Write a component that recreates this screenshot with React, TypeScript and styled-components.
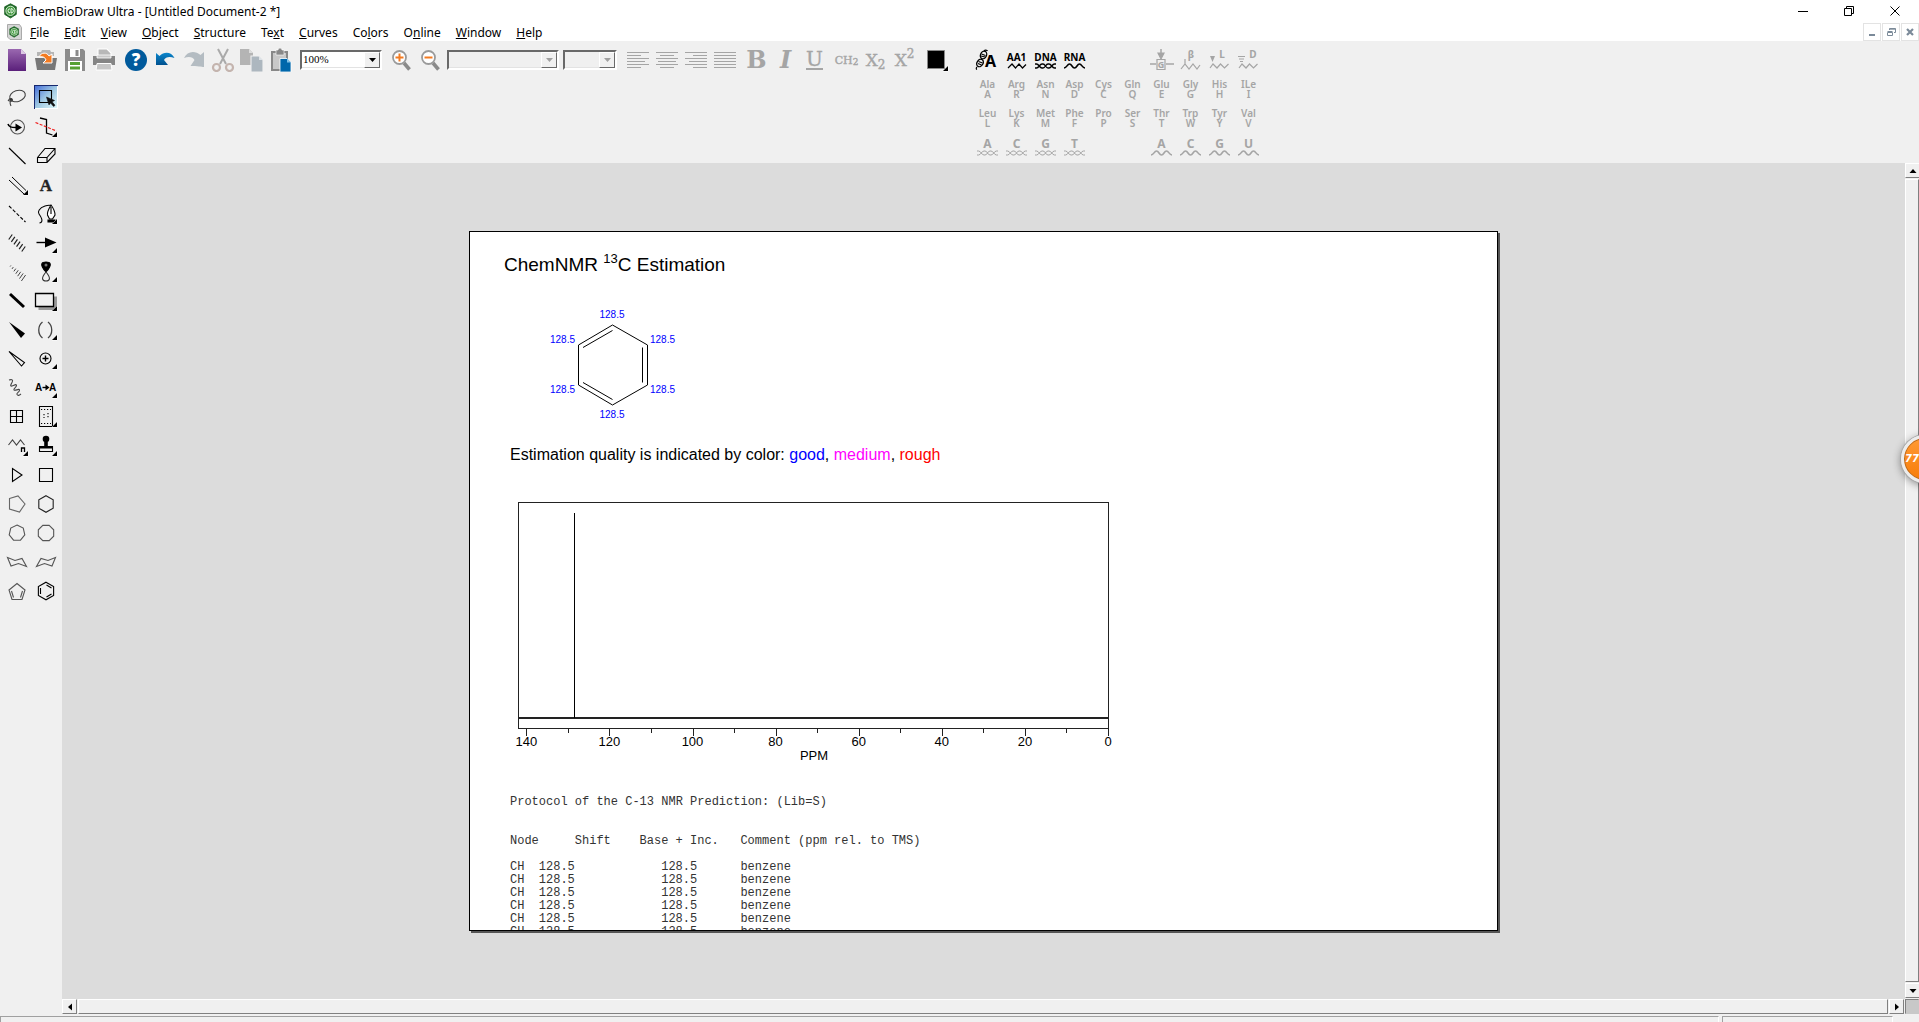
import React from 'react';
import styled, { createGlobalStyle, css } from 'styled-components';

const chrome = '#f0f0f0';
const disabled = '#a5a5a5';
const ui = `'Noto Sans', 'Open Sans', sans-serif`;
const doc = `'Liberation Sans', Arial, sans-serif`;

const GlobalStyle = createGlobalStyle`
  *, *::before, *::after { box-sizing: border-box; }
  body { margin: 0; background: ${chrome}; color: #000; font-family: ${ui}; font-size: 12px; }
  button { font: inherit; color: inherit; background: none; border: 0; padding: 0; margin: 0; }
  svg { display: block; }
`;

/* ---------- window frame ---------- */

const Window = styled.div`
  position: relative;
  display: flex;
  flex-direction: column;
  height: 100vh;
  overflow: hidden;
`;

const TitleBar = styled.header`
  display: flex;
  align-items: center;
  height: 22px;
  flex: none;
  padding: 0 1px 0 3px;
  background: #fff;
`;

const Title = styled.h1`
  flex: 1;
  margin: 0 0 0 5px;
  padding-top: 2px;
  font-size: 12px;
  font-weight: 400;
  line-height: 20px;
`;

const CaptionButton = styled.button`
  width: 46px;
  height: 20px;
  display: grid;
  place-items: center;
`;

const MenuBar = styled.nav`
  display: flex;
  align-items: center;
  height: 19px;
  flex: none;
  padding-left: 7px;
  background: #fff;
`;

const MenuList = styled.ul`
  flex: 1;
  display: flex;
  gap: 15px;
  list-style: none;
  margin: 0;
  padding: 2px 0 0 8px;
`;

const MenuItem = styled.button`
  display: block;
  line-height: 20px;
`;

const ChildButtons = styled.div`
  display: flex;
  gap: 1px;
`;

const ChildButton = styled.button`
  width: 18px;
  height: 18px;
  display: grid;
  place-items: center;
  border: 1px solid #e3e3e3;
  color: #7b8a99;
`;

/* ---------- work area ---------- */

const WorkArea = styled.div`
  flex: 1;
  min-height: 0;
  display: grid;
  grid-template-columns: 62px auto 1fr;
  grid-template-rows: 38px auto minmax(0, 1fr);
`;

const MainToolbar = styled.div`
  grid-column: 1 / 3;
  grid-row: 1;
  display: flex;
  align-items: center;
  gap: 3px;
  padding: 0 22px 0 2px;
`;

const ToolGroup = styled.div`
  display: flex;
`;

const ToolButton = styled.button<{ $dim?: boolean }>`
  width: 29px;
  height: 29px;
  display: grid;
  place-items: center;
  color: ${(p) => (p.$dim ? disabled : '#000')};
`;

const Glyph = styled.span<{ $size: number; $italic?: boolean; $light?: boolean; $under?: boolean }>`
  font-family: 'DejaVu Serif', 'Liberation Serif', serif;
  font-size: ${(p) => p.$size}px;
  line-height: 1;
  font-weight: ${(p) => (p.$light ? 400 : 700)};
  font-style: ${(p) => (p.$italic ? 'italic' : 'normal')};
  ${(p) => p.$light && css`-webkit-text-stroke: 0.4px currentColor;`}
  ${(p) => p.$under && css`border-bottom: 2px solid currentColor; line-height: 18px;`}
  white-space: nowrap;
`;

const Script = styled.span<{ $raise: number; $size: number }>`
  font-size: ${(p) => p.$size}px;
  line-height: 0;
  vertical-align: ${(p) => p.$raise}px;
`;

const ComboGroup = styled.div<{ $lead: number; $trail: number }>`
  display: flex;
  gap: 4px;
  margin: 0 ${(p) => p.$trail}px 0 ${(p) => p.$lead}px;
`;

const ComboBox = styled.span<{ $width: number; $off?: boolean }>`
  position: relative;
  display: block;
  width: ${(p) => p.$width}px;
  height: 20px;
  background: ${(p) => (p.$off ? chrome : '#fff')};
  border: 2px solid;
  border-color: #696969 #fff #fff #696969;
  box-shadow: inset -1px -1px 0 #e3e3e3;
`;

const ComboSelect = styled.select`
  display: block;
  appearance: none;
  width: 100%;
  height: 100%;
  border: 0;
  padding: 0 1px 2px;
  background: transparent;
  color: #000;
  opacity: 1;
  font-family: 'Liberation Serif', serif;
  font-size: 11px;
  line-height: 14px;
`;

const ComboArrow = styled.span<{ $off?: boolean }>`
  position: absolute;
  top: 0;
  right: 0;
  width: 16px;
  height: 16px;
  display: grid;
  place-items: center;
  background: ${chrome};
  border: 1px solid;
  border-color: #fff #696969 #696969 #fff;
  color: ${(p) => (p.$off ? '#a0a0a0' : '#000')};
  pointer-events: none;
`;

const BioPalette = styled.div`
  grid-column: 3;
  grid-row: 1 / 3;
  justify-self: start;
  display: grid;
  grid-template-columns: repeat(10, 29px);
  grid-auto-rows: 29px;
  padding: 4px 0 2px;
`;

const BioButton = styled.button<{ $on?: boolean; $col?: number }>`
  display: flex;
  flex-direction: column;
  align-items: center;
  justify-content: center;
  grid-column: ${(p) => p.$col ?? 'auto'};
  color: ${(p) => (p.$on ? '#000' : disabled)};
`;

const Residue = styled.span`
  font-size: 10px;
  font-weight: 600;
  line-height: 10px;
  text-align: center;
  white-space: pre-line;
`;

const Acid = styled.span<{ $big?: boolean }>`
  font-size: ${(p) => (p.$big ? 12 : 10)}px;
  font-weight: 700;
  line-height: 12px;
`;

const ToolBox = styled.aside`
  grid-column: 1;
  grid-row: 2 / 4;
  display: grid;
  grid-template-columns: repeat(2, 29px);
  grid-auto-rows: 29px;
  align-content: start;
  padding: 3px 0 0 2px;
`;

const PaletteButton = styled.button<{ $selected?: boolean }>`
  width: 24px;
  height: 24px;
  place-self: center;
  color: #000;
  ${(p) =>
    p.$selected &&
    css`
      background: linear-gradient(135deg, #3f68d8 0%, #9fc8e2 50%, #e4fbfb 100%);
      box-shadow: inset 1px 1px 0 #16286e, inset -1px -1px 0 #fff;
    `}
`;

/* ---------- document view ---------- */

const DocumentView = styled.div`
  grid-column: 2 / 4;
  grid-row: 3;
  display: grid;
  grid-template-columns: minmax(0, 1fr) 14px;
  grid-template-rows: minmax(0, 1fr) 15px;
`;

const Desk = styled.main`
  display: flex;
  justify-content: center;
  min-height: 0;
  padding: 68px 24px 68px;
  background: #dcdcdc;
`;

const Sheet = styled.article`
  flex: 1;
  max-width: 1029px;
  overflow: hidden;
  padding: 21px 34px 0;
  background: #fff;
  border: 1px solid #000;
  box-shadow: 2px 2px 0 #555;
  font-family: ${doc};
`;

const SheetTitle = styled.h2`
  margin: 0;
  font-size: 19px;
  font-weight: 400;
  line-height: 24px;
`;

const Mass = styled.sup`
  font-size: 13px;
  line-height: 0;
  vertical-align: 8px;
`;

const Molecule = styled.svg`
  margin: 29px 0 0 44px;
`;

const Quality = styled.p`
  margin: 23px 0 0 6px;
  font-size: 16px;
  line-height: 20px;
`;

const Tint = styled.span<{ $color: string }>`
  color: ${(p) => p.$color};
`;

const Spectrum = styled.svg`
  margin: 35px 0 0 6px;
  overflow: visible;
`;

const Protocol = styled.section`
  margin: 32px 0 0 6px;
  font-family: 'Liberation Mono', 'Courier New', monospace;
  font-size: 12px;
  line-height: 13px;
  color: #333;
`;

const ProtocolTitle = styled.h3`
  margin: 0 0 26px;
  font-size: 12px;
  font-weight: 400;
`;

const ShiftTable = styled.table`
  table-layout: fixed;
  width: 62ch;
  border-collapse: collapse;
  white-space: pre;
  th, td { padding: 0; text-align: left; font-weight: 400; }
  th { padding-bottom: 13px; }
  th:nth-child(2) { padding-left: 5ch; }
  td:nth-child(3) { padding-left: 3ch; }
`;

const Col = styled.col<{ $ch: number }>`
  width: ${(p) => p.$ch}ch;
`;

/* ---------- scroll bars and status bar ---------- */

const ScrollBar = styled.div<{ $vertical?: boolean }>`
  display: flex;
  flex-direction: ${(p) => (p.$vertical ? 'column' : 'row')};
  gap: 1px;
  padding: ${(p) => (p.$vertical ? '0 0 1px' : '0 1px 0 0')};
  background: ${chrome};
`;

const raised = css`
  border: 1px solid;
  border-color: #fff #808080 #808080 #fff;
`;

const ScrollButton = styled.button`
  ${raised}
  width: 15px;
  height: 15px;
  display: grid;
  place-items: center;
`;

const Thumb = styled.div`
  ${raised}
  flex: 1;
`;

const Corner = styled.div`
  background: #c8c8c8;
  border: 1px solid;
  border-color: #808080 transparent transparent #808080;
`;

const StatusBar = styled.footer`
  flex: none;
  display: flex;
  gap: 3px;
  height: 8px;
  padding: 2px 26px 0 0;
`;

const StatusPane = styled.div<{ $width?: number }>`
  flex: ${(p) => (p.$width ? `0 0 ${p.$width}px` : '1')};
  border: 1px solid #a0a0a0;
  border-right-color: #fff;
  border-bottom: 0;
`;

const Bubble = styled.div`
  position: absolute;
  top: 435px;
  right: -30px;
  width: 48px;
  height: 48px;
  padding-left: 1px;
  border-radius: 50%;
  border: 3px solid #ececec;
  background: linear-gradient(#ff9a35, #f77c08);
  box-shadow: 0 0 0 1px #a8a8a8, 0 2px 8px rgba(0, 0, 0, 0.45), inset 0 0 0 1px #b86a20;
  color: #fff;
  font: italic 700 10px/42px 'DejaVu Sans', sans-serif;
`;

/* ---------- icons ---------- */

type IconProps = { children: React.ReactNode; fly?: boolean; color?: string };

const Icon = ({ children, fly, color = 'currentColor' }: IconProps) => (
  <svg width="24" height="24" viewBox="0 0 24 24" fill="none" stroke={color} strokeWidth="1.1" aria-hidden="true">
    {children}
    {fly && <path d="M23 18v5h-5z" fill="#000" stroke="#fff" strokeWidth="1" paintOrder="stroke" />}
  </svg>
);

const Down = () => (
  <svg width="7" height="4" viewBox="0 0 7 4" fill="currentColor" aria-hidden="true"><path d="M0 0h7L3.500 4z" /></svg>
);

const Arrow = ({ d }: { d: string }) => (
  <svg width="8" height="8" viewBox="0 0 8 8" fill="#000" aria-hidden="true"><path d={d} /></svg>
);

const Logo = ({ framed }: { framed?: boolean }) => (
  <svg width="15" height="16" viewBox="0 0 15 16" aria-hidden="true">
    {framed && <path d="M.5 .5h12l2 3v12H3L.5 13z" fill="#d6d6d6" stroke="#999" strokeWidth=".8" />}
    <g transform={framed ? 'translate(1.5 2) scale(.75)' : undefined}>
      <path d="M7.500 .8l5.800 3v7.600l-5.800 3.600-5.800-3.600V3.800z" fill="#1f6b2a" stroke="#1b5e20" strokeWidth=".8" />
      <circle cx="7.500" cy="7.800" r="4.600" fill="#3f9a3c" stroke="#e6f4e0" strokeWidth=".9" />
      <path d="M7 5.800a2 2 0 1 0 0 4M8 5.600v4.400c3 0 3-4.400 0-4.400" fill="none" stroke="#fff" strokeWidth=".9" />
    </g>
  </svg>
);

const polygon = (n: number, cx: number, cy: number, r: number, turn: number) =>
  Array.from({ length: n }, (_, i) => {
    const a = ((turn + (360 / n) * i) * Math.PI) / 180;
    return `${(cx + r * Math.cos(a)).toFixed(2)},${(cy + r * Math.sin(a)).toFixed(2)}`;
  }).join(' ');

/* strokes laid across the diagonal of a bond, growing from one length to another */
const hashes = (count: number, from: number, to: number) =>
  Array.from({ length: count }, (_, i) => {
    const t = i / (count - 1);
    const x = 5.5 + 13 * t;
    const y = 7 + 12 * t;
    const h = (from + (to - from) * t) / 2;
    return `M${x - h * 0.7} ${y + h}L${x + h * 0.7} ${y - h}`;
  }).join('');

const gray = '#666';

const palette: { name: string; icon: React.ReactNode; selected?: boolean }[] = [
  { name: 'Lasso', icon: <Icon color="#444"><ellipse cx="12.500" cy="11" rx="8" ry="5.500" transform="rotate(-18 12.500 11)" /><path d="M3.500 16c0-3 4-3 4-1s-4 1-4.500 0M7 15c-2 1-2.500 3-1 6" /><circle cx="6" cy="14.500" r="1" fill="#000" /></Icon> },
  { name: 'Marquee', selected: true, icon: <Icon><path d="M5.500 5.500h12v12h-12z" /><path d="M12.500 12l8 3.500-2.500 1.200 3 3.600-1.400 1.200-3-3.600-1.600 2z" fill="#111" stroke="#111" strokeWidth=".6" /></Icon> },
  { name: 'Structure Perspective', icon: <Icon color="#555"><circle cx="12.500" cy="13" r="7" /><path d="M3 10c1 3 3 3.500 8 3.500" stroke="#000" strokeWidth="1.600" /><path d="M10.500 9.500l6.500 4-6.500 4z" fill="#000" stroke="none" /></Icon> },
  { name: 'Bond Rotation', icon: <Icon fly><path d="M6 4l6.500 1.500V19l6 2" strokeWidth="1.300" /><path d="M1.500 8.500l21 8.500" stroke="#f02020" strokeDasharray="3 1.500" /></Icon> },
  { name: 'Solid Bond', icon: <Icon><path d="M4 5l16.500 16" /></Icon> },
  { name: 'Eraser', icon: <Icon><path d="M3.500 14.500L11 5.500h10V11l-8 8.500H3.500zM3.500 14.500H13L21 5.500M13 14.500v5" /></Icon> },
  { name: 'Multiple Bonds', icon: <Icon fly><path d="M4 8l15 14M7 5l14 13.500" strokeWidth="1" /></Icon> },
  { name: 'Text', icon: <Icon><text x="12" y="19" textAnchor="middle" fontFamily="'Liberation Serif', serif" fontWeight="700" fontSize="17" fill="#222" stroke="#222" strokeWidth=".4">A</text></Icon> },
  { name: 'Dashed Bond', icon: <Icon><path d="M4 5l16.500 16" strokeDasharray="3.500 1.800" /></Icon> },
  { name: 'Pen', icon: <Icon fly><path d="M5.500 22c5-1 1-7-.5-9s0-6 6-8c3-1 6-1 6 0" /><path d="M17 4c-3 5-4 8-3.500 10l2 4h3l2.500-4c0-3-1-6-4-10zM17 6v7" fill="#fff" /><path d="M14 19h7v2h-7z" fill="#000" /></Icon> },
  { name: 'Hashed Bond', icon: <Icon color="#222"><path d={hashes(6, 5, 5)} strokeWidth="1.200" /></Icon> },
  { name: 'Arrow', icon: <Icon fly><path d="M2.500 12.500H12" strokeWidth="1.400" /><path d="M11 7.500l11.500 5-11.500 5z" fill="#000" stroke="none" /></Icon> },
  { name: 'Hashed Wedged Bond', icon: <Icon color="#333"><path d={hashes(7, 1, 6)} strokeWidth=".9" /></Icon> },
  { name: 'Orbital', icon: <Icon fly><path d="M12 13C4 4 9 3 12 3s8 1 0 10z" fill="#000" /><circle cx="12" cy="6" r="1.500" fill="#777" stroke="none" /><path d="M12 13c-6 7-3 9 0 9s6-2 0-9z" stroke="#333" /></Icon> },
  { name: 'Bold Bond', icon: <Icon><path d="M5 6l14 13" strokeWidth="3" /></Icon> },
  { name: 'Drawing Elements', icon: <Icon fly><path d="M4.500 8.500H23V22H4.500z" fill="#999" stroke="none" /><path d="M1.500 5.500h18v13h-18z" fill={chrome} strokeWidth="1.300" /></Icon> },
  { name: 'Wedged Bond', icon: <Icon><path d="M4 5l16 11.500-4 4.500z" fill="#000" stroke="none" /></Icon> },
  { name: 'Bracket', icon: <Icon fly color="#444"><path d="M8.500 5c-5 4-5 12 0 16M14 5c5 4 5 12 0 16" strokeWidth="1.300" /></Icon> },
  { name: 'Hollow Wedged Bond', icon: <Icon><path d="M4 5.500l15.500 11-3 3.500z" /></Icon> },
  { name: 'Chemical Symbol', icon: <Icon fly><circle cx="11.500" cy="12.500" r="5.500" /><path d="M8.500 12.500h6M11.500 9.500v6" strokeWidth="1.400" /></Icon> },
  { name: 'Wavy Bond', icon: <Icon color="#444"><path d="M4 5c3-1 4.500 0 3 2.500s-2 4 0 3.500 4.500-2.500 4.500-.5-3.500 3-2.500 4.500 5-2 5.500 0-3.500 3-2.500 4.500 2 1 4-.5" /></Icon> },
  { name: 'Reaction Mapping', icon: <Icon fly><text x="1" y="16" fontFamily="'Liberation Sans', sans-serif" fontWeight="700" fontSize="10" fill="#000" stroke="none">A</text><text x="15" y="16" fontFamily="'Liberation Sans', sans-serif" fontWeight="700" fontSize="10" fill="#000" stroke="none">A</text><path d="M8.500 12.500h5" strokeWidth="1.400" /><path d="M11.500 9.500l4 3-4 3z" fill="#000" stroke="none" /></Icon> },
  { name: 'Table', icon: <Icon><path d="M5.500 6.500h12v12h-12zM11.500 6.500v12M5.500 12.500h12" /></Icon> },
  { name: 'TLC Plate', icon: <Icon fly><path d="M5.500 2.500h13v20h-13z" /><path d="M7 5.500h10M7 19.500h10M10 10v4M14 9v6" strokeDasharray="1.200 1.800" /></Icon> },
  { name: 'Acyclic Chain', icon: <Icon fly color="#444"><path d="M3.500 12l4-5 4 5 4-5 4 5" /><path d="M16.500 19v-4h3v4" stroke="#000" strokeWidth="1.300" /></Icon> },
  { name: 'Templates', icon: <Icon fly><circle cx="12" cy="6" r="3.300" fill="#000" stroke="none" /><path d="M10.800 9h2.400v4h-2.400z" fill="#000" /><path d="M5.500 13.500h13v5h-13z" /><path d="M5 15.500h14V13H5z" fill="#000" stroke="none" /></Icon> },
  { name: 'Cyclopropane', icon: <Icon><path d="M7.500 6.500v13l9.500-6.500z" /></Icon> },
  { name: 'Cyclobutane', icon: <Icon><path d="M5.500 6.500h13v13h-13z" /></Icon> },
  { name: 'Cyclopentane', icon: <Icon color={gray}><path d="M4.500 7.500L13 5l7 8-5.500 8-10-3z" /></Icon> },
  { name: 'Cyclohexane', icon: <Icon color="#222"><polygon points={polygon(6, 12, 13, 8.3, -90)} /></Icon> },
  { name: 'Cycloheptane', icon: <Icon color="#555"><polygon points={polygon(7, 12, 13, 8, -90)} /></Icon> },
  { name: 'Cyclooctane', icon: <Icon color="#555"><polygon points={polygon(8, 12, 13, 8.3, -67.5)} /></Icon> },
  { name: 'Cyclohexane Chair', icon: <Icon color="#555"><path d="M2.500 8.500L10 11.500l7-2 4.500 8-8-3-7.500 2.500z" /></Icon> },
  { name: 'Cyclohexane Chair, flipped', icon: <Icon color="#555"><path d="M21.500 8.500L14 11.500 7 9.500l-4.500 8 8-3 7.500 2.500z" /></Icon> },
  { name: 'Cyclopentadiene', icon: <Icon color="#555"><path d="M12 5.500l8 6.500-3 9.500H7L4 12zM6.500 13l2 6.500M17.500 13l-2 6.500" /></Icon> },
  { name: 'Benzene', icon: <Icon><polygon points={polygon(6, 12, 13, 8.8, -90)} /><path d="M12.500 7l5 3M12.500 19l5-3M6.500 10v6" /></Icon> },
];

const fileTools: { name: string; icon: React.ReactNode }[] = [
  { name: 'New', icon: <Icon><defs><linearGradient id="plum" x2="0" y2="1"><stop stopColor="#9a68b0" /><stop offset="1" stopColor="#5a1f7a" /></linearGradient></defs><path d="M3 1h13l5 5v17H3z" fill="url(#plum)" stroke="none" /><path d="M16 1v5h5z" fill="#dcc8e4" stroke="none" /></Icon> },
  { name: 'Open', icon: <Icon><path d="M3 4h4l1-2h8l1 2h3v4H3z" fill="#b5b5b5" stroke="none" /><path d="M1 10h22l-2 12H3z" fill="#777" stroke="none" /><path d="M5 9c2-5 8-5 10-1l3-2v9h-9l3-3c-1-3-4-4-7-3z" fill="#f47b20" stroke="#fff" strokeWidth="1" /></Icon> },
  { name: 'Save', icon: <Icon><path d="M2 1h18l2 2v20H2z" fill="#8b8b8b" stroke="none" /><path d="M7 1h10v8H7z" fill="#fff" stroke="none" /><path d="M12.500 2h3v6h-3z" fill="#8b8b8b" stroke="none" /><path d="M5 13h14v10H5z" fill="#fff" stroke="none" /><path d="M7 14h10v3H7zM7 18.500h10v3H7z" fill="#56a032" stroke="none" /></Icon> },
  { name: 'Print', icon: <Icon><path d="M6 1h9l4 4v6H6z" fill="#b8b8b8" stroke="#fff" /><path d="M1 8h22v9H1z" fill="#858585" stroke="none" /><path d="M5 7h14v3H5z" fill="#c8c8c8" stroke="#fff" strokeWidth=".8" /><path d="M5 15.500h14l1 6.500H4z" fill="#c6c6c6" stroke="#fff" strokeWidth="1" /></Icon> },
];

const blueFade = (
  <linearGradient id="sea" x2="0" y2="1"><stop stopColor="#0a86cc" /><stop offset="1" stopColor="#00518f" /></linearGradient>
);

const editTools: { name: string; icon: React.ReactNode }[] = [
  { name: 'Help', icon: <Icon><defs>{blueFade}</defs><circle cx="12" cy="12" r="11" fill="#005a9c" stroke="none" /><text x="12" y="18" textAnchor="middle" fontFamily="'Open Sans', sans-serif" fontWeight="800" fontSize="17" fill="#fff" stroke="none">?</text></Icon> },
  { name: 'Undo', icon: <Icon><path d="M3 5l3.500 3c5-5 12-4 15 2-5-2-9-1-10.500 2l4 5H3z" fill="url(#sea)" stroke="none" /></Icon> },
  { name: 'Redo', icon: <Icon><path d="M22 4l-3.500 3C13 2 5 3 2 10c5-2 9-1 10.500 2l-4 6c7 0 11 1 13.500 1z" fill="#b4bcc2" stroke="none" /></Icon> },
  { name: 'Cut', icon: <Icon color="#aaa"><path d="M7 1l8 15M17 1L9 16" strokeWidth="2" /><circle cx="5.500" cy="19.500" r="3.500" stroke="#c4b4ae" strokeWidth="2.200" /><circle cx="18.500" cy="19.500" r="3.500" stroke="#c4b4ae" strokeWidth="2.200" /></Icon> },
  { name: 'Copy', icon: <Icon><path d="M0 1h9l4 4v12H0z" fill="#b4b4b4" stroke="none" /><path d="M9 1v4h4z" fill="#ddd" stroke="none" /><path d="M11 8h8l4 4v12H11z" fill="#adb7bf" stroke={chrome} /><path d="M19 8v4h4z" fill="#dde2e6" stroke="none" /></Icon> },
  { name: 'Paste', icon: <Icon><path d="M3 4h15v18H3z" fill="#c8c8c8" stroke="#888" strokeWidth="2" /><path d="M7 2h2a2 2 0 0 1 4 0h2v5H7z" fill="#888" stroke="#fff" strokeWidth=".6" /><path d="M11 10.500h7l4 4V24H11z" fill="#0067ab" stroke="#fff" strokeWidth=".8" /><path d="M18 10.500v4h4z" fill="#7fc0e8" stroke="none" /></Icon> },
];

const ZoomIcon = ({ plus }: { plus?: boolean }) => (
  <Icon>
    <path d="M15 15l5.500 6.500" stroke="#8a8a8a" strokeWidth="3.600" />
    <circle cx="10.500" cy="9.500" r="6.500" fill="#fff" stroke="#9a9a9a" strokeWidth="1.800" />
    <path d={plus ? 'M6.500 9.500h8M10.500 5.500v8' : 'M6.500 9.500h8'} stroke="#f47b20" strokeWidth="2" />
  </Icon>
);

const alignments: { name: string; rows: [number, number][] }[] = [
  { name: 'Align Left', rows: [[0, 22], [0, 14], [0, 22], [0, 18], [0, 22], [0, 14]] },
  { name: 'Align Center', rows: [[0, 22], [4, 14], [0, 22], [2, 18], [0, 22], [4, 14]] },
  { name: 'Align Right', rows: [[0, 22], [8, 14], [0, 22], [4, 18], [0, 22], [8, 14]] },
  { name: 'Justify', rows: [[0, 22], [0, 22], [0, 22], [0, 22], [0, 22], [0, 22]] },
];

const AlignIcon = ({ rows }: { rows: [number, number][] }) => (
  <svg width="22" height="17" viewBox="0 0 22 17" fill="#a5a5a5" aria-hidden="true">
    {rows.map(([x, w], i) => <rect key={i} x={x} y={i * 3} width={w} height="1" />)}
  </svg>
);

const Helix = ({ heavy }: { heavy?: boolean }) => (
  <svg width="21" height="6" viewBox="0 0 21 6" fill="none" stroke="currentColor" strokeWidth={heavy ? 1.3 : 1} aria-hidden="true">
    <path d="M0 1h1.500C4 1 4.500 5 7 5h1c2.500 0 2.500-4 5-4h1c2.500 0 3 4 5.500 4H21M0 5h1.500C4 5 4.500 1 7 1h1c2.500 0 2.500 4 5 4h1c2.500 0 3-4 5.500-4H21" />
  </svg>
);

const Wave = () => (
  <svg width="21" height="6" viewBox="0 0 21 6" fill="none" stroke="currentColor" strokeWidth="1.600" aria-hidden="true">
    <path d="M0 5C3 5 3 1 5.500 1S8 5 10.500 5 13 1 15.500 1 18 5 21 5" />
  </svg>
);

const Zigzag = () => (
  <svg width="20" height="6" viewBox="0 0 20 6" fill="none" stroke="currentColor" strokeWidth="1.200" aria-hidden="true">
    <path d="M1 5l4-4 3.500 4L12 1l3.500 4L19 1.500" />
  </svg>
);

const BioDrawing = styled.svg`
  overflow: visible;
`;

const BioIcon = ({ children }: { children: React.ReactNode }) => (
  <BioDrawing width="26" height="22" viewBox="0 0 26 22" fill="none" stroke="currentColor" strokeWidth="1.200" aria-hidden="true">{children}</BioDrawing>
);

const bioLabel = { fontFamily: "'Noto Sans', sans-serif", fontWeight: 700, fill: 'currentColor', stroke: 'none' };

const residues: [string, string][] = [
  ['Ala', 'A'], ['Arg', 'R'], ['Asn', 'N'], ['Asp', 'D'], ['Cys', 'C'], ['Gln', 'Q'], ['Glu', 'E'], ['Gly', 'G'], ['His', 'H'], ['ILe', 'I'],
  ['Leu', 'L'], ['Lys', 'K'], ['Met', 'M'], ['Phe', 'F'], ['Pro', 'P'], ['Ser', 'S'], ['Thr', 'T'], ['Trp', 'W'], ['Tyr', 'Y'], ['Val', 'V'],
];

/* the access key is the letter at the given index */
const menus: [string, number][] = [
  ['File', 0], ['Edit', 0], ['View', 0], ['Object', 0], ['Structure', 0], ['Text', 2], ['Curves', 0], ['Colors', 2], ['Online', 1], ['Window', 0], ['Help', 0],
];

/* ---------- document content ---------- */

const shiftLabels: [number, number, 'start' | 'middle'][] = [
  [64, 12, 'middle'], [2, 37, 'start'], [102, 37, 'start'], [2, 87, 'start'], [102, 87, 'start'], [64, 112, 'middle'],
];

const ppmToX = (ppm: number) => 598.5 - ppm * 4.155;
const ticks = Array.from({ length: 15 }, (_, i) => i * 10);

const Combo = ({ label, width, value }: { label: string; width: number; value?: string }) => (
  <ComboBox $width={width} $off={!value}>
    <ComboSelect aria-label={label} disabled={!value}><option>{value ?? ''}</option></ComboSelect>
    <ComboArrow $off={!value}><Down /></ComboArrow>
  </ComboBox>
);

export default function App() {
  return (
    <Window>
      <GlobalStyle />
      <TitleBar>
        <Logo />
        <Title>ChemBioDraw Ultra - [Untitled Document-2 *]</Title>
        <CaptionButton aria-label="Minimize"><svg width="10" height="11" viewBox="0 0 10 11"><path d="M0 5.500h10" stroke="#000" /></svg></CaptionButton>
        <CaptionButton aria-label="Restore"><svg width="10" height="10" viewBox="0 0 10 10" fill="none" stroke="#000"><path d="M.5 2.500h7v7h-7zM2.500 2.500v-2h7v7h-2" /></svg></CaptionButton>
        <CaptionButton aria-label="Close"><svg width="10" height="10" viewBox="0 0 10 10" stroke="#000"><path d="M.5 .5l9 9M9.500 .5l-9 9" /></svg></CaptionButton>
      </TitleBar>
      <MenuBar>
        <Logo framed />
        <MenuList>
          {menus.map(([label, key]) => (
            <li key={label}>
              <MenuItem>{label.slice(0, key)}<u>{label[key]}</u>{label.slice(key + 1)}</MenuItem>
            </li>
          ))}
        </MenuList>
        <ChildButtons>
          <ChildButton aria-label="Minimize document"><svg width="8" height="8" viewBox="0 0 8 8"><path d="M1 6h6v2H1z" fill="currentColor" /></svg></ChildButton>
          <ChildButton aria-label="Restore document"><svg width="9" height="8" viewBox="0 0 9 8" fill="none" stroke="currentColor"><path d="M.5 4.500h5v3h-5zM.5 3.500h5M2.500 2V.5h6v4H7M2.500 1.200h6" /></svg></ChildButton>
          <ChildButton aria-label="Close document"><svg width="8" height="8" viewBox="0 0 8 8" stroke="currentColor" strokeWidth="2.200"><path d="M1 1l6 6M7 1L1 7" /></svg></ChildButton>
        </ChildButtons>
      </MenuBar>

      <WorkArea>
        <MainToolbar>
          <ToolGroup>{fileTools.map((t) => <ToolButton key={t.name} aria-label={t.name}>{t.icon}</ToolButton>)}</ToolGroup>
          <ToolGroup>{editTools.map((t) => <ToolButton key={t.name} aria-label={t.name}>{t.icon}</ToolButton>)}</ToolGroup>
          <ComboGroup $lead={2} $trail={1}><Combo label="Zoom level" width={82} value="100%" /></ComboGroup>
          <ToolGroup>
            <ToolButton aria-label="Zoom In"><ZoomIcon plus /></ToolButton>
            <ToolButton aria-label="Zoom Out"><ZoomIcon /></ToolButton>
          </ToolGroup>
          <ComboGroup $lead={0} $trail={3}>
            <Combo label="Font" width={112} />
            <Combo label="Font size" width={54} />
          </ComboGroup>
          <ToolGroup>{alignments.map((a) => <ToolButton key={a.name} aria-label={a.name}><AlignIcon rows={a.rows} /></ToolButton>)}</ToolGroup>
          <ToolGroup>
            <ToolButton $dim aria-label="Bold"><Glyph $size={24}>B</Glyph></ToolButton>
            <ToolButton $dim aria-label="Italic"><Glyph $size={24} $italic>I</Glyph></ToolButton>
            <ToolButton $dim aria-label="Underline"><Glyph $size={20} $light $under>U</Glyph></ToolButton>
          </ToolGroup>
          <ToolGroup>
            <ToolButton $dim aria-label="Formula"><Glyph $size={11} $light>CH<Script $size={9} $raise={-1}>2</Script></Glyph></ToolButton>
            <ToolButton $dim aria-label="Subscript"><Glyph $size={17} $light>X<Script $size={12} $raise={-3}>2</Script></Glyph></ToolButton>
            <ToolButton $dim aria-label="Superscript"><Glyph $size={17} $light>X<Script $size={12} $raise={8}>2</Script></Glyph></ToolButton>
          </ToolGroup>
          <ToolButton aria-label="Color">
            <Icon fly><path d="M2.500 2.500h17v18h-17z" fill="#000" stroke="#888" strokeWidth="1" /></Icon>
          </ToolButton>
        </MainToolbar>

        <BioPalette>
          <BioButton $on aria-label="Biopolymer">
            <BioIcon>
              <ellipse cx="8.500" cy="6" rx="3" ry="4" transform="rotate(25 8.500 6)" strokeWidth="1.300" />
              <ellipse cx="5" cy="14" rx="3" ry="4" transform="rotate(35 5 14)" strokeWidth="1.300" />
              <path d="M9 2c1-1.500 3-1 3.500 0M6.500 5l4 1.500M6 7l4 1M3.500 12.500l4 1.500M3 14.500l3.500 1.500M2 18c-1 1-1 2 0 2.500" />
              <text x="10" y="18" fontSize="16" {...bioLabel}>A</text>
            </BioIcon>
          </BioButton>
          <BioButton $on><Acid>AA1</Acid><Zigzag /></BioButton>
          <BioButton $on><Acid>DNA</Acid><Helix heavy /></BioButton>
          <BioButton $on><Acid>RNA</Acid><Wave /></BioButton>
          <BioButton $col={7} aria-label="Attachment">
            <BioIcon><path d="M1 15h6M17 15h8M12 0v7" strokeWidth="1.500" /><path d="M9 4h6l-3 6z" fill="currentColor" /><path d="M8 10.500h8v10H8z" /><text x="12" y="19" textAnchor="middle" fontSize="9" {...bioLabel}>G</text></BioIcon>
          </BioButton>
          <BioButton $col={8} aria-label="Beta amino acid">
            <BioIcon><text x="13" y="9" textAnchor="middle" fontSize="10" {...bioLabel}>β</text><path d="M3 20l4-5 4 5 4-5 4 5 3-4M7 15v-5" /></BioIcon>
          </BioButton>
          <BioButton $col={9} aria-label="L amino acid">
            <BioIcon><path d="M3 7h5l-2.500 6z" fill="currentColor" stroke="none" /><text x="15" y="9" textAnchor="middle" fontSize="10" {...bioLabel}>L</text><path d="M3 19l3-4 4 4 3.500-4 4 4 4-4" /></BioIcon>
          </BioButton>
          <BioButton $col={10} aria-label="D amino acid">
            <BioIcon><path d="M2 7.500h7M3 10h5M4 12.500h3" /><text x="17" y="9" textAnchor="middle" fontSize="10" {...bioLabel}>D</text><path d="M3 19l3-4 4 4 3.500-4 4 4 4-4" /></BioIcon>
          </BioButton>
          {residues.map(([code, letter]) => (
            <BioButton key={code}><Residue>{`${code}\n${letter}`}</Residue></BioButton>
          ))}
          {['A', 'C', 'G', 'T'].map((b) => <BioButton key={b}><Acid $big>{b}</Acid><Helix /></BioButton>)}
          {['A', 'C', 'G', 'U'].map((b, i) => <BioButton key={b} $col={7 + i}><Acid $big>{b}</Acid><Wave /></BioButton>)}
        </BioPalette>

        <ToolBox>
          {palette.map((t) => (
            <PaletteButton key={t.name} aria-label={t.name} aria-pressed={!!t.selected} $selected={t.selected}>{t.icon}</PaletteButton>
          ))}
        </ToolBox>

        <DocumentView>
          <Desk>
            <Sheet>
              <SheetTitle>ChemNMR <Mass>13</Mass>C Estimation</SheetTitle>
              <Molecule width="132" height="116" viewBox="0 0 132 116" fill="none" stroke="#000" role="img" aria-label="Benzene with carbon shifts">
                <path d="M64.500 19l35 20v40l-35 20-34-20V39z" />
                <path d="M35 41.500l29.500-17M94.500 41.500v35M35 76.500l29.500 17" />
                {shiftLabels.map(([x, y, anchor]) => (
                  <text key={`${x}-${y}`} x={x} y={y} textAnchor={anchor} fontFamily={doc} fontSize="10" fill="#00f" stroke="none">128.5</text>
                ))}
              </Molecule>
              <Quality>
                Estimation quality is indicated by color: <Tint $color="#00f">good</Tint>, <Tint $color="#f0f">medium</Tint>, <Tint $color="#f00">rough</Tint>
              </Quality>
              <Spectrum width="610" height="264" viewBox="0 0 610 264" fill="none" stroke="#222" shapeRendering="crispEdges" role="img" aria-label="Carbon-13 spectrum">
                <rect x="8.500" y="2.500" width="590" height="226" />
                <path d="M8.500 218h590" strokeWidth="2" />
                <path d={`M${ppmToX(128.5)} 13v205`} stroke="#000" />
                {ticks.map((ppm) => (
                  <path key={ppm} d={`M${ppmToX(ppm)} 228v${ppm % 20 === 0 ? 8 : 5}`} />
                ))}
                {ticks.filter((ppm) => ppm % 20 === 0).map((ppm) => (
                  <text key={ppm} x={ppmToX(ppm) - 0.5} y="246" textAnchor="middle" fontFamily={doc} fontSize="13" fill="#000" stroke="none">{ppm}</text>
                ))}
                <text x="304" y="260" textAnchor="middle" fontFamily={doc} fontSize="13" fill="#000" stroke="none">PPM</text>
              </Spectrum>
              <Protocol>
                <ProtocolTitle>Protocol of the C-13 NMR Prediction: (Lib=S)</ProtocolTitle>
                <ShiftTable>
                  <colgroup><Col $ch={4} /><Col $ch={14} /><Col $ch={14} /><Col $ch={30} /></colgroup>
                  <thead>
                    <tr><th>Node</th><th>Shift</th><th>Base + Inc.</th><th>Comment (ppm rel. to TMS)</th></tr>
                  </thead>
                  <tbody>
                    {Array.from({ length: 6 }, (_, i) => (
                      <tr key={i}><td>CH</td><td>128.5</td><td>128.5</td><td>benzene</td></tr>
                    ))}
                  </tbody>
                </ShiftTable>
              </Protocol>
            </Sheet>
          </Desk>
          <ScrollBar $vertical>
            <ScrollButton aria-label="Scroll up"><Arrow d="M.5 6h7L4 2z" /></ScrollButton>
            <Thumb />
            <ScrollButton aria-label="Scroll down"><Arrow d="M.5 2h7L4 6z" /></ScrollButton>
          </ScrollBar>
          <ScrollBar>
            <ScrollButton aria-label="Scroll left"><Arrow d="M6 .5v7L2 4z" /></ScrollButton>
            <Thumb />
            <ScrollButton aria-label="Scroll right"><Arrow d="M2 .5v7L6 4z" /></ScrollButton>
          </ScrollBar>
          <Corner />
        </DocumentView>
      </WorkArea>

      <StatusBar>
        <StatusPane />
        <StatusPane $width={171} />
      </StatusBar>
      <Bubble>77</Bubble>
    </Window>
  );
}
